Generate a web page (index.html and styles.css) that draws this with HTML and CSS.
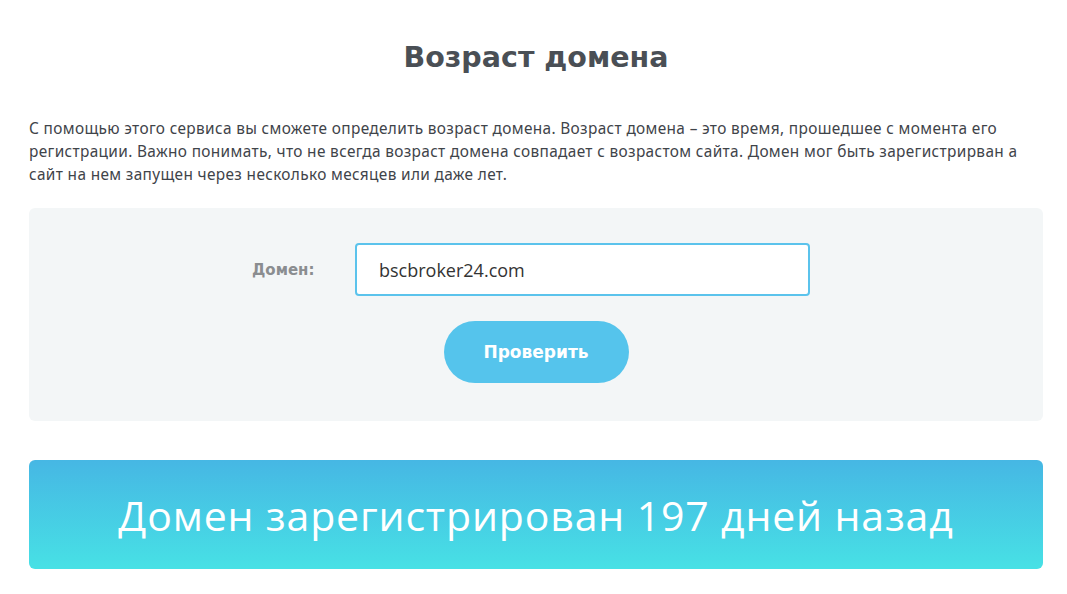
FILE: index.html
```html
<!DOCTYPE html>
<html lang="ru">
<head>
    <meta charset="utf-8">
    <title>Возраст домена</title>
    <link rel="stylesheet" href="styles.css">
</head>
<body>
    <div class="page">
        <h1 class="title">Возраст домена</h1>

        <p class="intro">С помощью этого сервиса вы сможете определить возраст домена. Возраст домена – это время, прошедшее с момента его регистрации. Важно понимать, что не всегда возраст домена совпадает с возрастом сайта. Домен мог быть зарегистрирван а сайт на нем запущен через несколько месяцев или даже лет.</p>

        <form class="check-form" id="checkForm">
            <div class="form-row">
                <label for="domain" class="form-label">Домен:</label>
                <input type="text" id="domain" name="domain" class="form-input" value="bscbroker24.com">
            </div>
            <button type="submit" class="btn">Проверить</button>
        </form>

        <div class="result">Домен зарегистрирован 197 дней назад</div>
    </div>
</body>
</html>
```

FILE: styles.css
```css
body {
    margin: 0;
    background: #fff;
    font-family: "Noto Sans", "Open Sans", sans-serif;
}

.page {
    width: 1014px;
    margin-left: 29px;
    padding-top: 36px;
}

.title {
    margin: 0;
    text-align: center;
    font-family: "DejaVu Sans", sans-serif;
    font-size: 28.5px;
    font-weight: bold;
    color: #4a4f55;
    line-height: 44px;
}

.intro {
    margin: 37px 0 0;
    font-size: 15.4px;
    letter-spacing: 0.35px;
    line-height: 23px;
    color: #3f444a;
}

.check-form {
    margin-top: 22px;
    background: #f3f6f7;
    border-radius: 6px;
    padding: 35px 0 38px;
    display: flex;
    flex-direction: column;
    align-items: center;
}

.form-row {
    display: flex;
    align-items: center;
    margin-right: 10px;
}

.form-label {
    width: 103px;
    font-family: "DejaVu Sans", sans-serif;
    font-size: 15px;
    font-weight: bold;
    color: #8a8d90;
}

.form-input {
    width: 455px;
    height: 53px;
    box-sizing: border-box;
    border: 2px solid #5bc3ec;
    border-radius: 4px;
    padding: 0 22px;
    font-family: "Open Sans", sans-serif;
    font-size: 18px;
    color: #333;
    background: #fff;
    outline: none;
}

.btn {
    margin-top: 25px;
    width: 185px;
    height: 62px;
    border: none;
    border-radius: 31px;
    background: #55c4ec;
    color: #fff;
    font-family: "DejaVu Sans", sans-serif;
    font-size: 17px;
    font-weight: bold;
    cursor: pointer;
}

.result {
    margin-top: 39px;
    height: 109px;
    border-radius: 6px;
    background: linear-gradient(to bottom, #46b7e4, #47e1e5);
    color: #fff;
    display: flex;
    align-items: center;
    justify-content: center;
    font-family: "Open Sans", sans-serif;
    font-size: 41px;
    letter-spacing: 0.85px;
    font-weight: normal;
}
```
